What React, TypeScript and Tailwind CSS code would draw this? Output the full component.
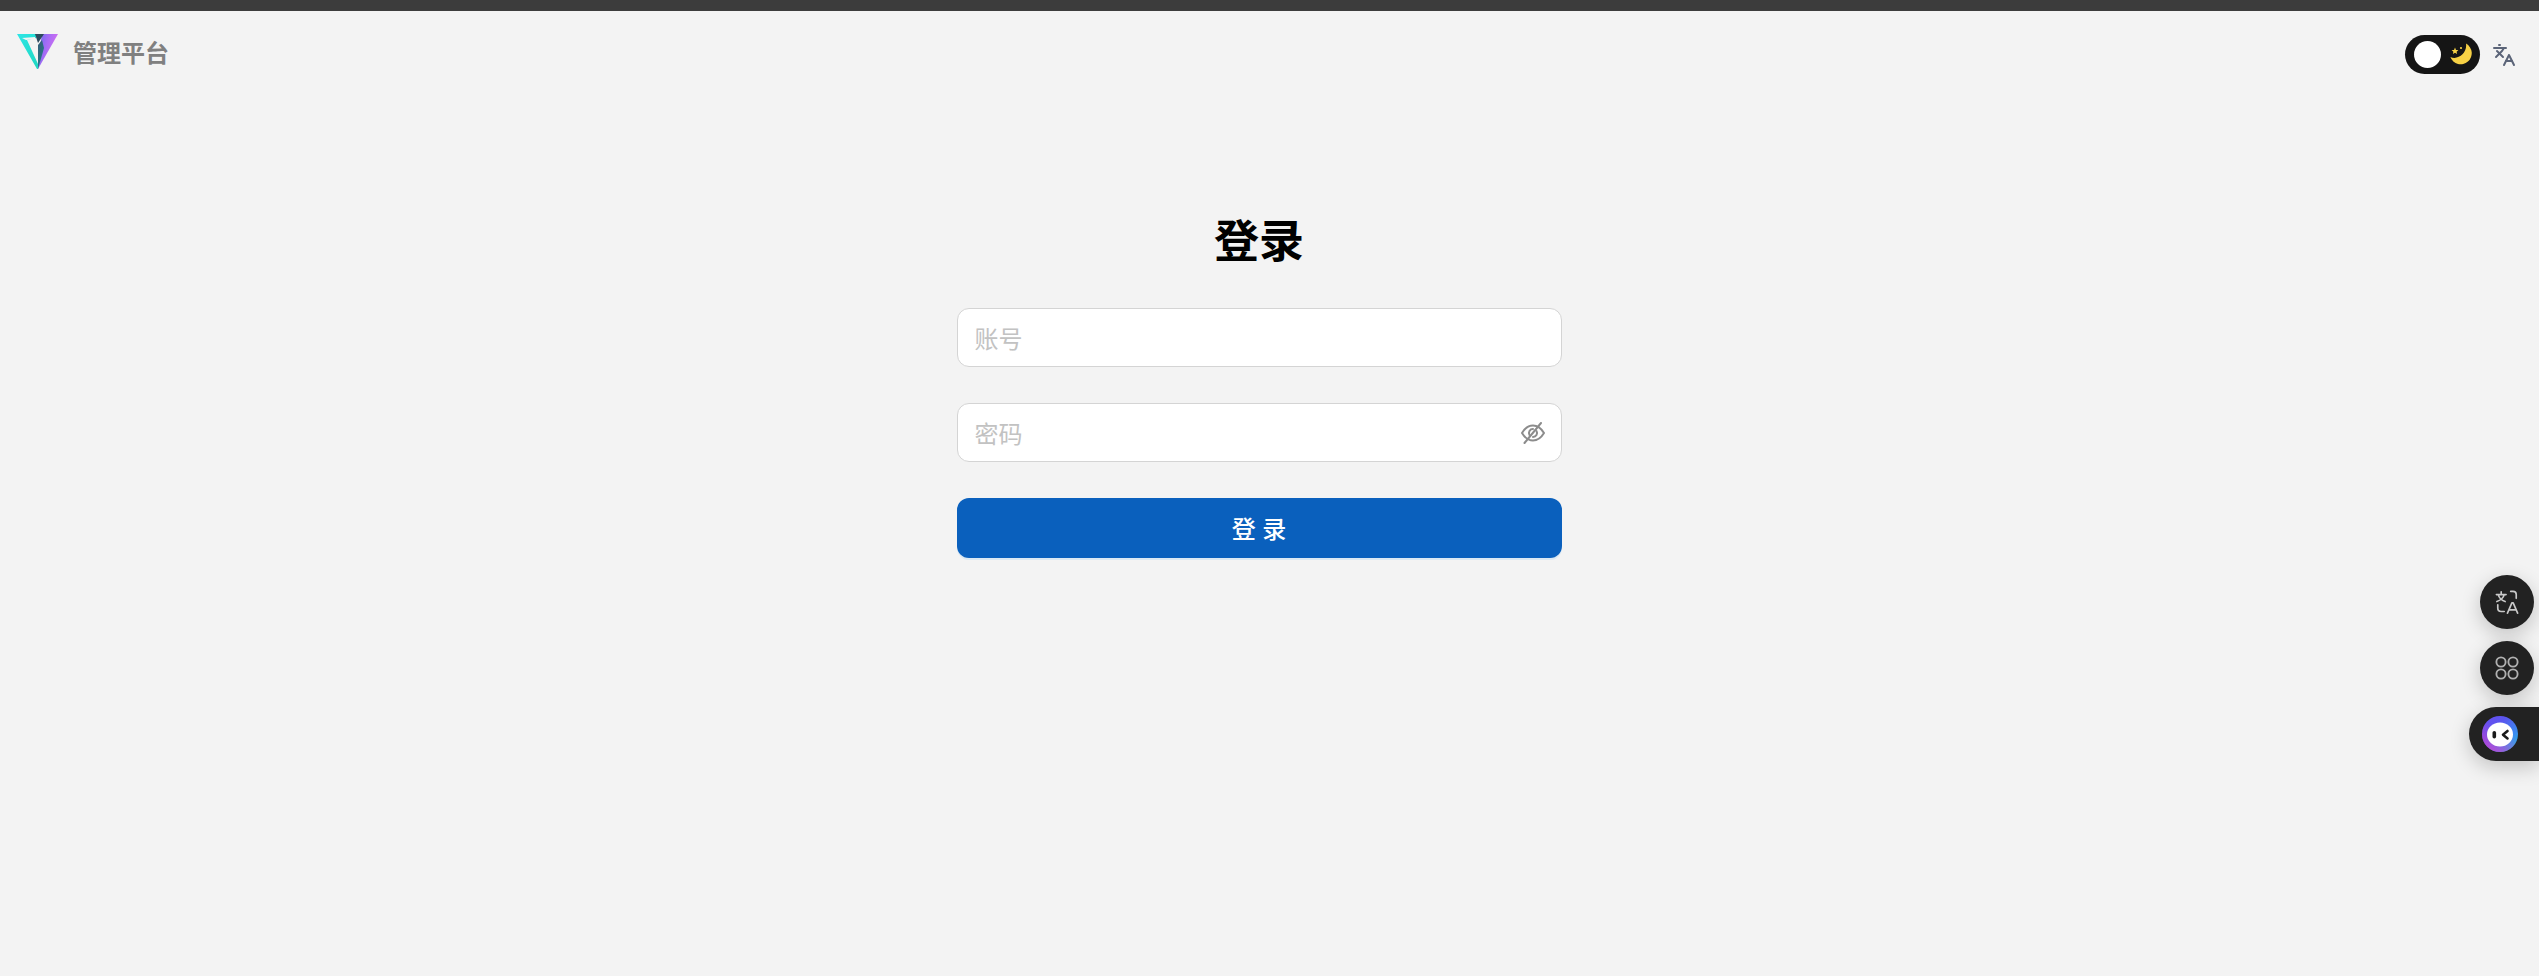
import { Languages } from "lucide-react";

function Logo() {
  return (
    <svg width="42" height="36" viewBox="0 0 42 36" className="mb-[5px] shrink-0">
      <defs>
        <linearGradient id="lgA" x1="0" y1="0" x2="0.8" y2="1">
          <stop offset="0" stopColor="#2ee6e6" />
          <stop offset="1" stopColor="#1fd8c4" />
        </linearGradient>
        <linearGradient id="lgB" x1="0" y1="0" x2="1" y2="0.4">
          <stop offset="0" stopColor="#6a6cf0" />
          <stop offset="0.5" stopColor="#a86cf5" />
          <stop offset="1" stopColor="#d86ef0" />
        </linearGradient>
        <linearGradient id="lgC" x1="0" y1="0" x2="0.6" y2="1">
          <stop offset="0" stopColor="#3a5a78" />
          <stop offset="1" stopColor="#1f7f88" />
        </linearGradient>
      </defs>
      <polygon points="0,0 19,0 19,4 10,6 21,30 21,35 20,35" fill="url(#lgA)" />
      <polygon points="25,0 41,0 21,35 21,24" fill="url(#lgB)" />
      <polygon points="18,0 27,0 21,9" fill="#2c4a5e" />
      <polygon points="21,11 25,6 27,14 21,35" fill="url(#lgC)" />
      <polygon points="5,4 18,3 18,5 9,6" fill="#f3f3f3" />
    </svg>
  );
}

function Moon() {
  return (
    <svg width="23" height="23" viewBox="0 0 23 23">
      <path d="M16 0.6 A11 11 0 1 1 0.4 14 C8 17.5 17.5 10 16 0.6 Z" fill="#f7d145" />
      <polygon
        points="5,4.5 6,6.9 8.4,7.1 6.6,8.7 7.1,11 5,9.8 2.9,11 3.4,8.7 1.6,7.1 4,6.9"
        fill="#f7d145"
      />
      <circle cx="11" cy="5" r="1.1" fill="#f7d145" />
    </svg>
  );
}

function EyeOff() {
  return (
    <svg width="24" height="22" viewBox="0 0 24 22" fill="none" stroke="#8c8c8c" strokeWidth="2" strokeLinecap="round">
      <path d="M1 11 C4 6 8 3.5 12 3.5 C16 3.5 20 6 23 11 C20 16 16 18.5 12 18.5 C8 18.5 4 16 1 11 Z" />
      <path d="M12 7 A4 4 0 0 0 8.5 13" />
      <path d="M12 15 A4 4 0 0 0 15.5 9" />
      <path d="M20 1 L3.5 21" />
    </svg>
  );
}

function FabTranslate() {
  return (
    <svg width="24" height="24" viewBox="0 0 26 26" fill="none" stroke="#c9c9c9" strokeWidth="1.8" strokeLinecap="round" strokeLinejoin="round">
      <path d="M1.5 5 H12 M6.7 2 V5 M3.5 5 C4.5 9 7 11 11 12.5 M10 5 C9 9 6 11 2 12.5" />
      <path d="M13.5 25 L18.3 14 H19.7 L24.5 25 M15.3 21.5 H22.7" />
      <path d="M17 1.5 H19.5 C21.5 1.5 23 3 23 5 V9" />
      <path d="M3 16 V19.5 C3 21.8 4.5 23.3 6.7 23.3 H10" />
    </svg>
  );
}

function FabGrid() {
  return (
    <svg width="24" height="24" viewBox="0 0 26 26" fill="none" stroke="#b0b0b0" strokeWidth="2">
      <rect x="1.5" y="1.5" width="10" height="10" rx="5" ry="5" />
      <rect x="14.5" y="1.5" width="10" height="10" rx="5" ry="5" />
      <rect x="1.5" y="14.5" width="10" height="10" rx="5" ry="5" />
      <rect x="14.5" y="14.5" width="10" height="10" rx="5" ry="5" />
    </svg>
  );
}

function Bot() {
  return (
    <svg width="36" height="36" viewBox="0 0 36 36">
      <defs>
        <linearGradient id="botG" x1="0" y1="0" x2="1" y2="1">
          <stop offset="0" stopColor="#6d4df2" />
          <stop offset="0.35" stopColor="#5a55ee" />
          <stop offset="0.7" stopColor="#3a8cf0" />
          <stop offset="1" stopColor="#22c3d8" />
        </linearGradient>
        <linearGradient id="botH" x1="0" y1="1" x2="0.4" y2="0.3">
          <stop offset="0" stopColor="#d23fd0" />
          <stop offset="1" stopColor="#d23fd0" stopOpacity="0" />
        </linearGradient>
      </defs>
      <circle cx="18" cy="18" r="18" fill="url(#botG)" />
      <circle cx="18" cy="18" r="18" fill="url(#botH)" />
      <ellipse cx="18" cy="18.5" rx="13" ry="12" fill="#ffffff" />
      <rect x="10.5" y="15" width="3.6" height="7.5" rx="1.8" fill="#1a1a1a" />
      <path d="M25.5 15 L21 18.7 L25.5 22.4" fill="none" stroke="#1a1a1a" strokeWidth="2.6" strokeLinecap="round" strokeLinejoin="round" />
    </svg>
  );
}

export default function App() {
  return (
    <div
      className="relative flex h-[976px] w-full flex-col overflow-hidden bg-[#f3f3f3]"
      style={{ fontFamily: '"Liberation Sans", "Noto Sans CJK SC", sans-serif' }}
    >
      <div className="h-[11px] shrink-0 bg-[#3c3c3c]" />

      <header className="flex h-[87px] shrink-0 items-center justify-between pl-[17px] pr-[23px]">
        <div className="flex items-center gap-[14px]">
          <Logo />
          <span className="mb-[2px] text-[24px] font-bold leading-[32px] text-[#808080]">管理平台</span>
        </div>
        <div className="flex items-center gap-[12px]">
          <div className="flex h-[39px] w-[75px] items-center justify-between rounded-full bg-[#151515] pl-[9px] pr-[7px]">
            <div className="h-[27px] w-[27px] rounded-full bg-white" />
            <Moon />
          </div>
          <Languages size={24} color="#5b6478" strokeWidth={2} />
        </div>
      </header>

      <main className="flex justify-center pr-[21px] pt-[115px]">
        <div className="flex w-[605px] flex-col">
          <h1 className="text-center text-[45px] font-bold leading-[60px] text-black">登录</h1>
          <div className="mt-[35px] flex h-[59px] items-center rounded-[12px] border border-[#d4d4d4] bg-white px-[17px]">
            <span className="pt-[4px] text-[24px] leading-[32px] text-[#c2c2c2]">账号</span>
          </div>
          <div className="mt-[36px] flex h-[59px] items-center justify-between rounded-[12px] border border-[#d4d4d4] bg-white pl-[17px] pr-[16px]">
            <span className="pt-[4px] text-[24px] leading-[32px] text-[#c2c2c2]">密码</span>
            <EyeOff />
          </div>
          <button className="mt-[36px] flex h-[60px] items-center justify-center rounded-[12px] bg-[#0a60bd] pt-[4px] text-[24px] font-medium text-white shadow-[0_2px_0_rgba(5,145,255,0.1)]">
            登 录
          </button>
        </div>
      </main>

      <div className="absolute right-[5px] top-[575px] flex h-[54px] w-[54px] items-center justify-center rounded-full bg-[#222222] shadow-[0_6px_20px_rgba(0,0,0,0.2)]">
        <FabTranslate />
      </div>
      <div className="absolute right-[5px] top-[641px] flex h-[54px] w-[54px] items-center justify-center rounded-full bg-[#222222] shadow-[0_6px_20px_rgba(0,0,0,0.2)]">
        <FabGrid />
      </div>
      <div className="absolute right-0 top-[707px] flex h-[54px] w-[70px] items-center rounded-l-full bg-[#222222] pl-[13px] shadow-[0_6px_20px_rgba(0,0,0,0.2)]">
        <Bot />
      </div>
    </div>
  );
}
